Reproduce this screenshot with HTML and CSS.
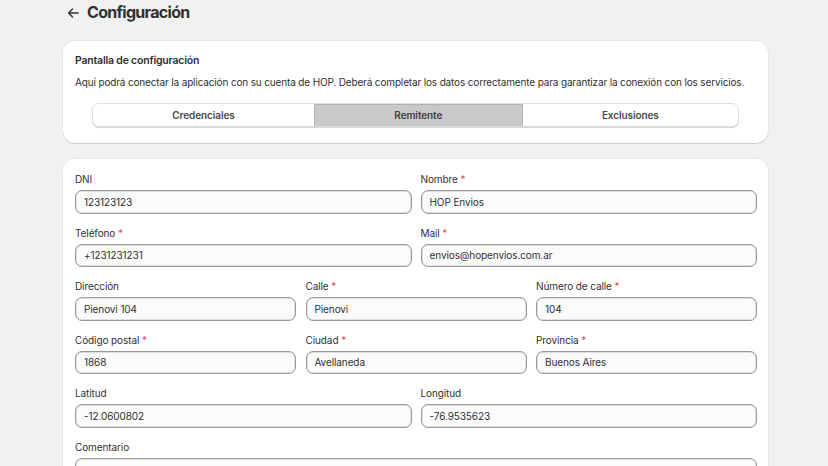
FILE: index.html
```html
<!DOCTYPE html>
<html lang="es">
<head>
<meta charset="utf-8">
<link rel="stylesheet" href="styles.css">
</head>
<body>
<div class="page">
  <header class="head">
    <span class="back">
      <svg width="12" height="12" viewBox="0 0 12 12"><path d="M11 6H1.5M5.5 2 1.5 6l4 4" fill="none" stroke="#303030" stroke-width="1.4" stroke-linecap="round" stroke-linejoin="round"/></svg>
    </span>
    <h1 class="title">Configuración</h1>
  </header>

  <section class="card intro">
    <h2 class="card-title">Pantalla de configuración</h2>
    <p class="desc">Aquí podrá conectar la aplicación con su cuenta de HOP. Deberá completar los datos correctamente para garantizar la conexión con los servicios.</p>
    <div class="tabs">
      <button class="tab">Credenciales</button>
      <button class="tab active">Remitente</button>
      <button class="tab">Exclusiones</button>
    </div>
  </section>

  <section class="card form">
    <div class="row two">
      <label class="field"><span class="lbl">DNI</span><input class="inp" value="123123123"></label>
      <label class="field"><span class="lbl">Nombre <i>*</i></span><input class="inp" value="HOP Envios"></label>
    </div>
    <div class="row two">
      <label class="field"><span class="lbl">Teléfono <i>*</i></span><input class="inp" value="+1231231231"></label>
      <label class="field"><span class="lbl">Mail <i>*</i></span><input class="inp" value="envios@hopenvios.com.ar"></label>
    </div>
    <div class="row three">
      <label class="field"><span class="lbl">Dirección</span><input class="inp" value="Pienovi 104"></label>
      <label class="field"><span class="lbl">Calle <i>*</i></span><input class="inp" value="Pienovi"></label>
      <label class="field"><span class="lbl">Número de calle <i>*</i></span><input class="inp" value="104"></label>
    </div>
    <div class="row three">
      <label class="field"><span class="lbl">Código postal <i>*</i></span><input class="inp" value="1868"></label>
      <label class="field"><span class="lbl">Ciudad <i>*</i></span><input class="inp" value="Avellaneda"></label>
      <label class="field"><span class="lbl">Provincia <i>*</i></span><input class="inp" value="Buenos Aires"></label>
    </div>
    <div class="row two">
      <label class="field"><span class="lbl">Latitud</span><input class="inp" value="-12.0600802"></label>
      <label class="field"><span class="lbl">Longitud</span><input class="inp" value="-76.9535623"></label>
    </div>
    <div class="row one">
      <label class="field"><span class="lbl">Comentario</span><textarea class="inp area"></textarea></label>
    </div>
  </section>
</div>
</body>
</html>
```

FILE: styles.css
```css
* { box-sizing: border-box; }
html, body { margin: 0; padding: 0; }
body {
  background: #f1f1f1;
  font-family: Inter, "Noto Sans", sans-serif;
  color: #303030;
  overflow: hidden;
  height: 466px;
}
.page {
  width: 705px;
  margin-left: 63px;
}
.head {
  display: flex;
  align-items: center;
  height: 25px;
  padding-left: 4px;
  gap: 8px;
}
.back { display: flex; width: 12px; height: 12px; }
.title {
  margin: 0;
  font-size: 16px;
  font-weight: 700;
  letter-spacing: -0.7px;
  line-height: 25px;
}
.card {
  background: #fff;
  border-radius: 12px;
  box-shadow: 0 1px 0 rgba(0,0,0,0.10), 0 0 0 1px rgba(0,0,0,0.04);
}
.intro {
  margin-top: 16px;
  padding: 13px 12px 16px;
}
.card-title {
  margin: 0;
  font-size: 10.5px;
  font-weight: 600;
  letter-spacing: -0.2px;
  line-height: 14px;
}
.desc {
  margin: 7px 0 0;
  font-size: 10px;
  letter-spacing: -0.15px;
  line-height: 14px;
  color: #303030;
  white-space: nowrap;
}
.tabs {
  display: flex;
  margin: 14px 17px 0;
  height: 24px;
  border-radius: 7px;
  border: 1px solid #dcdcdc;
  box-shadow: 0 1px 1px rgba(0,0,0,0.18);
  overflow: hidden;
  background: #fff;
}
.tab {
  flex: 1 1 auto;
  border: 0;
  background: #fff;
  font-family: inherit;
  font-size: 10px;
  letter-spacing: -0.1px;
  font-weight: 600;
  color: #4a4a4a;
  padding: 0;
  cursor: pointer;
}
.tab.active {
  background: #c9c9c9;
  color: #404040;
  box-shadow: inset 0 1px 0 #b3b3b3;
  border-left: 1px solid #b3b3b3;
  border-right: 1px solid #b3b3b3;
}
.tab.active + .tab { border-left: 0; }
.form {
  margin-top: 16px;
  padding: 13px 11px 0 12px;
  height: 320px;
  display: flex;
  flex-direction: column;
  gap: 12px;
}
.row { display: grid; gap: 9px; }
.row.two { grid-template-columns: 1fr 1fr; }
.row.three { grid-template-columns: 1fr 1fr 1fr; gap: 9.5px; }
.row.one { grid-template-columns: 1fr; }
.field { display: flex; flex-direction: column; gap: 4px; }
.lbl {
  font-size: 10px;
  letter-spacing: -0.1px;
  line-height: 14px;
  color: #303030;
}
.lbl i { font-style: normal; color: #e5484d; }
.inp {
  height: 23.5px;
  border: 1px solid #9a9a9a;
  border-radius: 7px;
  background: #fbfbfb;
  font-family: inherit;
  font-size: 10px;
  letter-spacing: -0.1px;
  color: #303030;
  padding: 0 8px;
  outline: none;
  box-shadow: inset 0 0 0 0.5px #c4c4c4;
}
.area { height: 40px; resize: none; }
```
